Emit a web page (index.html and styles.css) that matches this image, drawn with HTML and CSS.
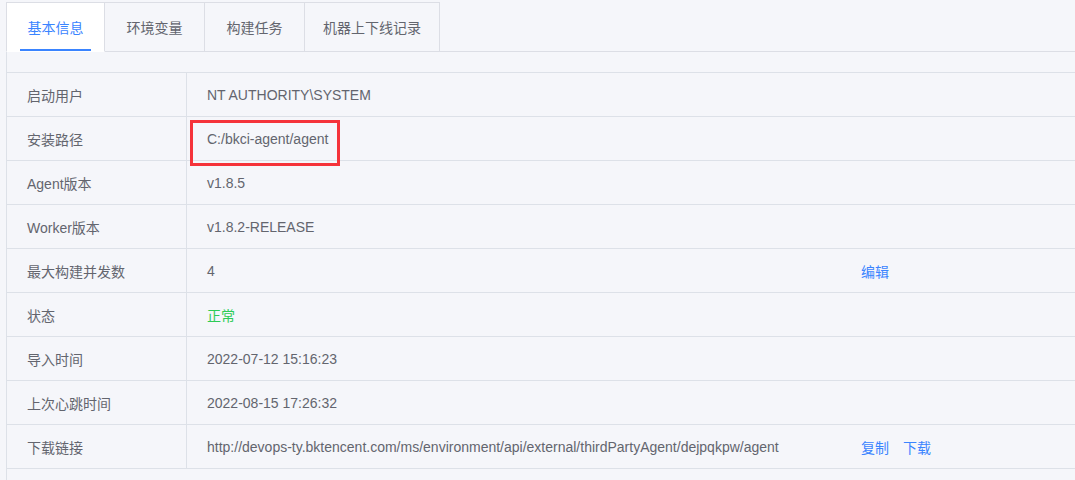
FILE: index.html
```html
<!DOCTYPE html>
<html lang="zh">
<head>
<meta charset="utf-8">
<title>节点详情</title>
<link rel="stylesheet" href="styles.css">
</head>
<body>
<div class="page">
  <div class="tabs">
    <div class="tab tab-1 active"><span>基本信息</span></div>
    <div class="tab tab-2"><span>环境变量</span></div>
    <div class="tab tab-3"><span>构建任务</span></div>
    <div class="tab tab-4"><span>机器上下线记录</span></div>
    <div class="tab-rest"></div>
  </div>
  <div class="panel">
    <div class="table">
      <div class="row"><div class="label">启动用户</div><div class="value">NT AUTHORITY\SYSTEM</div><div class="actions"></div></div>
      <div class="row"><div class="label">安装路径</div><div class="value"><span>C:/bkci-agent/agent</span><div class="mark"></div></div><div class="actions"></div></div>
      <div class="row"><div class="label">Agent版本</div><div class="value">v1.8.5</div><div class="actions"></div></div>
      <div class="row"><div class="label">Worker版本</div><div class="value">v1.8.2-RELEASE</div><div class="actions"></div></div>
      <div class="row"><div class="label">最大构建并发数</div><div class="value">4</div><div class="actions"><a class="link">编辑</a></div></div>
      <div class="row"><div class="label">状态</div><div class="value ok">正常</div><div class="actions"></div></div>
      <div class="row"><div class="label">导入时间</div><div class="value">2022-07-12 15:16:23</div><div class="actions"></div></div>
      <div class="row"><div class="label">上次心跳时间</div><div class="value">2022-08-15 17:26:32</div><div class="actions"></div></div>
      <div class="row"><div class="label">下载链接</div><div class="value">http://devops-ty.bktencent.com/ms/environment/api/external/thirdPartyAgent/dejpqkpw/agent</div><div class="actions"><a class="link">复制</a><a class="link">下载</a></div></div>
    </div>
  </div>
</div>
</body>
</html>
```

FILE: styles.css
```css
html, body {
  margin: 0;
  padding: 0;
  background: #f5f6fa;
}
body {
  font-family: "Liberation Sans", Arial, "Noto Sans CJK SC", sans-serif;
  font-size: 14px;
  color: #63656e;
  width: 1075px;
  height: 480px;
  overflow: hidden;
}
.page {
  padding: 2px 0 0 6px;
}
.tabs {
  display: flex;
  height: 50px;
}
.tab {
  box-sizing: border-box;
  height: 50px;
  border-top: 1px solid #dcdee5;
  border-right: 1px solid #dcdee5;
  border-bottom: 1px solid #dcdee5;
  display: flex;
  align-items: center;
  justify-content: center;
  position: relative;
  color: #63656e;
}
.tab-1 { width: 99px; border-left: 1px solid #dcdee5; }
.tab-2 { width: 100px; }
.tab-3 { width: 100px; }
.tab-4 { width: 135px; }
.tab span { margin-bottom: 1px; }
.tab.active {
  background: #fff;
  color: #3a84ff;
  border-bottom-color: #fff;
}
.tab.active::after {
  content: "";
  position: absolute;
  left: 13px;
  right: 13px;
  bottom: 0;
  height: 2px;
  background: #3a84ff;
}
.tab-rest {
  flex: 1;
  border-bottom: 1px solid #dcdee5;
}
.panel {
  box-sizing: border-box;
  border-left: 1px solid #dde1e8;
  padding-top: 20px;
  height: 428px;
}
.table {
  border-top: 1px solid #dde1e8;
}
.row {
  display: grid;
  grid-template-columns: 180px 1fr 214px;
  height: 44px;
  box-sizing: border-box;
  border-bottom: 1px solid #dde1e8;
}
.label {
  border-right: 1px solid #dde1e8;
  padding-left: 20px;
  display: flex;
  align-items: center;
}
.value {
  padding-left: 20px;
  display: flex;
  align-items: center;
  position: relative;
  white-space: nowrap;
}
.value.ok { color: #2dcb56; }
.actions {
  display: flex;
  align-items: center;
  gap: 14px;
}
.link {
  color: #3a84ff;
  cursor: pointer;
}
.mark {
  position: absolute;
  left: 3px;
  top: 3px;
  width: 150px;
  height: 46px;
  box-sizing: border-box;
  border: 3px solid #f5333a;
}
```
